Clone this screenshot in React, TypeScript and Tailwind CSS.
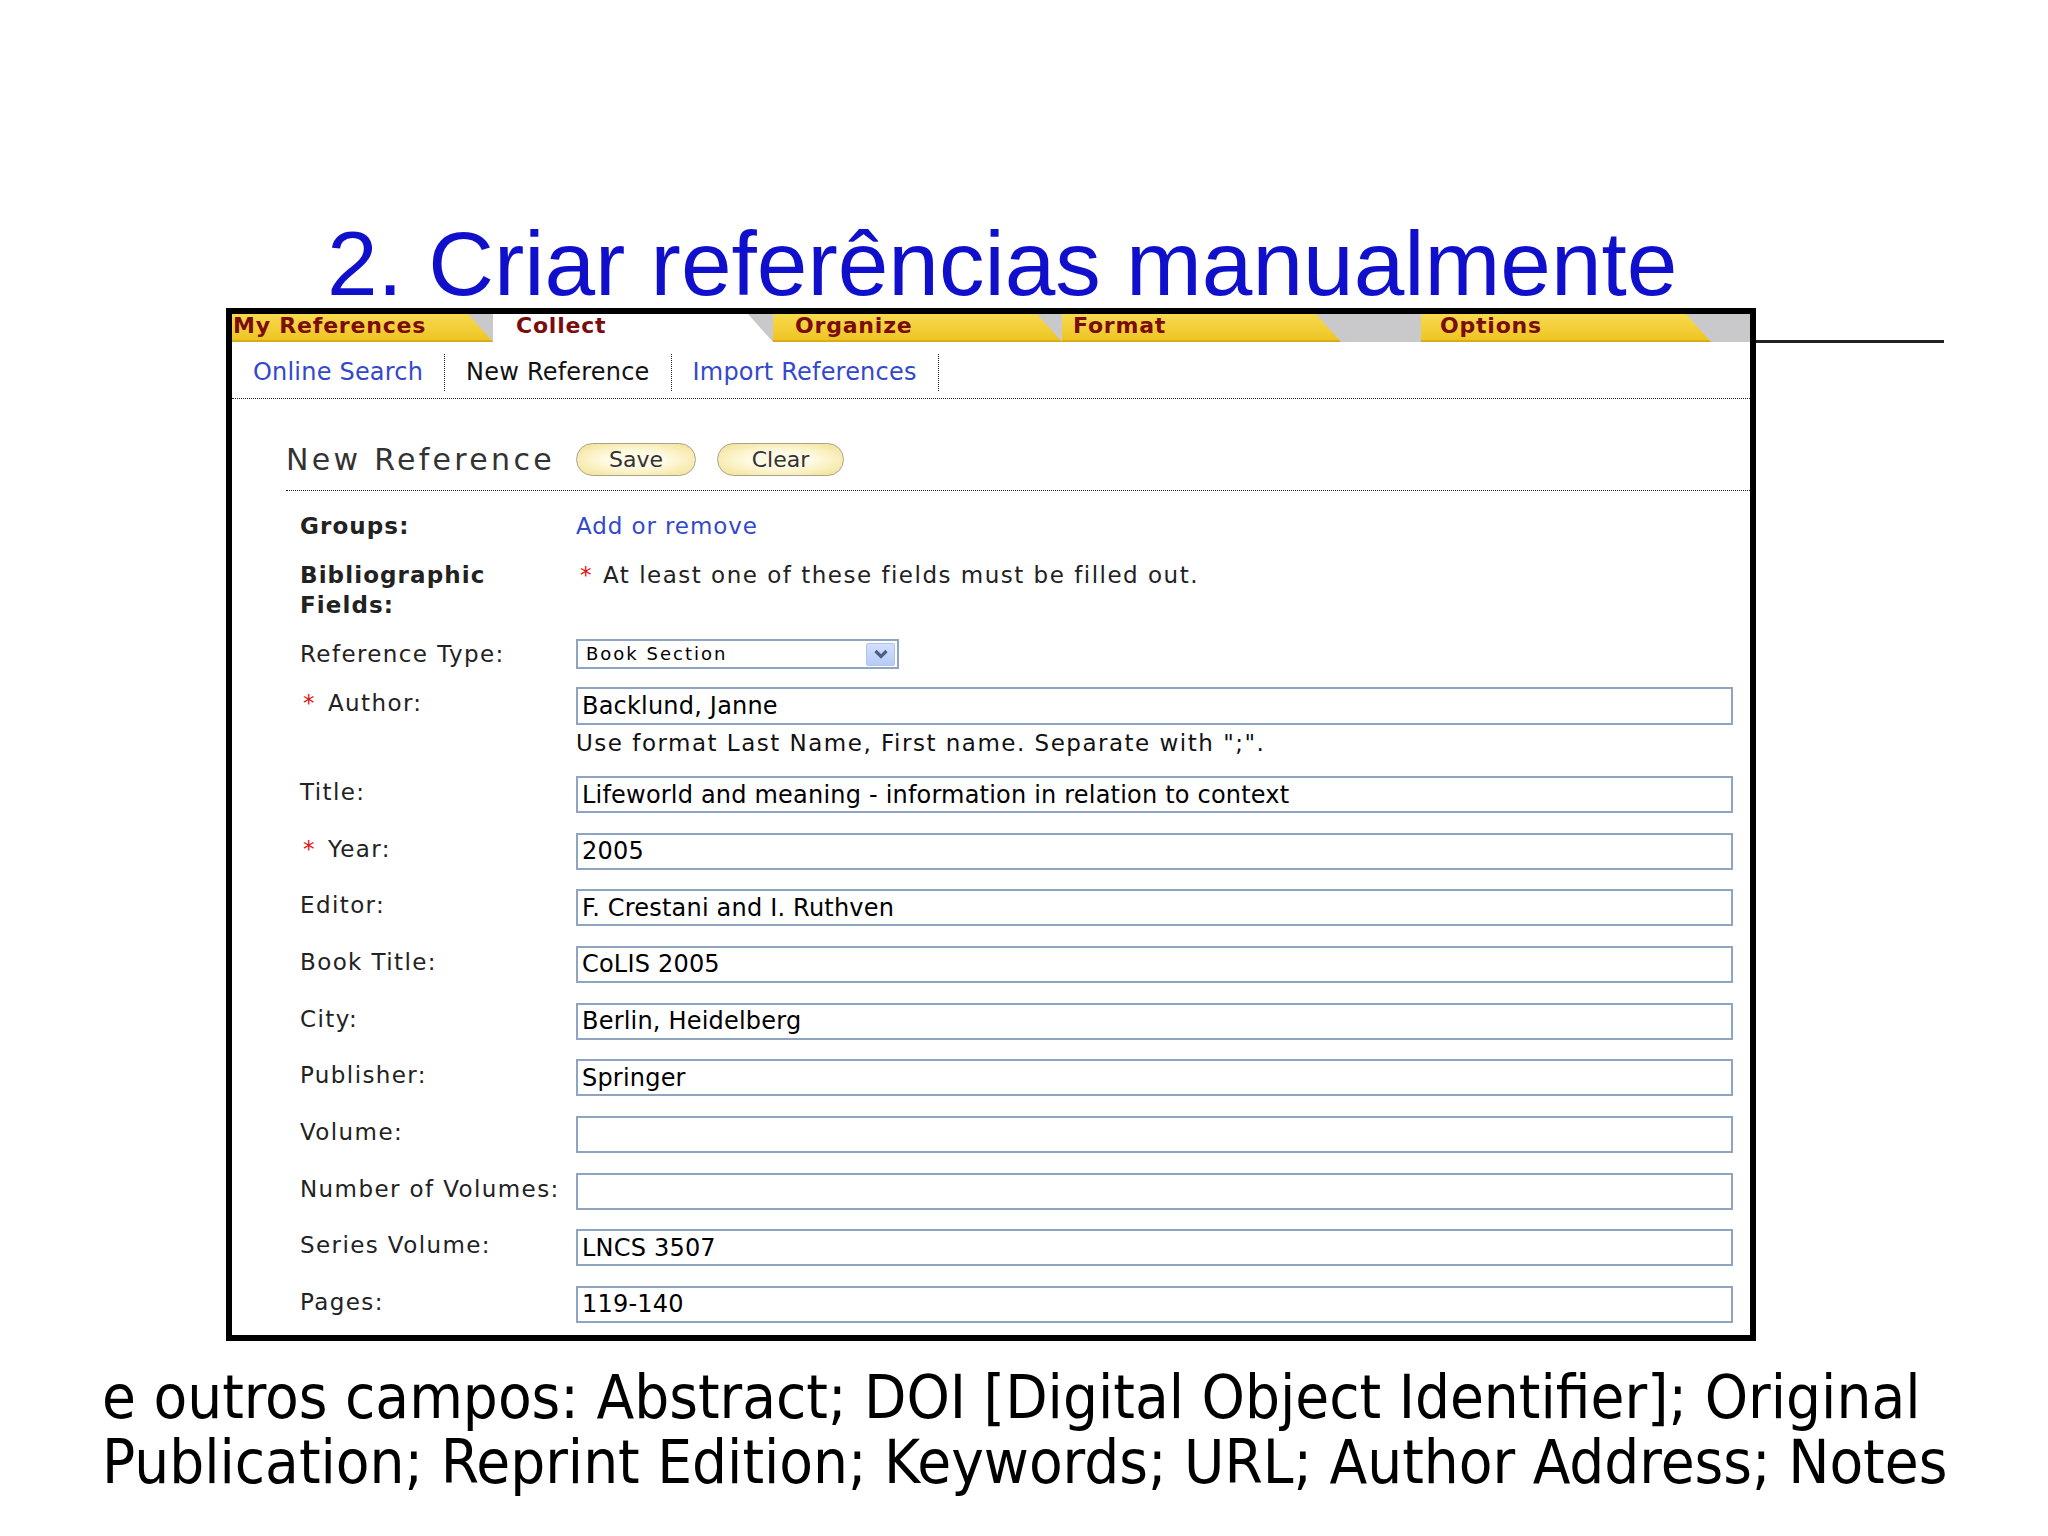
import React from 'react';

// slide: "Criar referências manualmente" with a RefWorks-like form screenshot
const ui = "font-['DejaVu_Sans','Liberation_Sans',sans-serif]";

const tabs = [
  { label: 'My References', w: 'w-[261px]', pl: 'pl-[1px]', active: false },
  { label: 'Collect', w: 'w-[280px]', pl: 'pl-[23px]', active: true },
  { label: 'Organize', w: 'w-[289px]', pl: 'pl-[22px]', active: false },
  { label: 'Format', w: 'w-[279px]', pl: 'pl-[11px]', active: false },
];

const fields = [
  { label: 'Title:', value: 'Lifeworld and meaning - information in relation to context' },
  { label: 'Year:', value: '2005', req: true },
  { label: 'Editor:', value: 'F. Crestani and I. Ruthven' },
  { label: 'Book Title:', value: 'CoLIS 2005' },
  { label: 'City:', value: 'Berlin, Heidelberg' },
  { label: 'Publisher:', value: 'Springer' },
  { label: 'Volume:', value: '' },
  { label: 'Number of Volumes:', value: '' },
  { label: 'Series Volume:', value: 'LNCS 3507' },
  { label: 'Pages:', value: '119-140' },
];

function Tab({ label, w, pl, active }: { label: string; w: string; pl: string; active: boolean }) {
  return (
    <div
      className={`${w} ${pl} h-full shrink-0 [clip-path:polygon(0_0,calc(100%_-_25px)_0,100%_100%,0_100%)] ${
        active ? 'bg-white' : 'bg-gradient-to-b from-[#f7da4c] to-[#eec31c] shadow-[inset_0_-2px_0_#d8ad1c]'
      }`}
    >
      <span className="block text-[22px] leading-[24px] font-bold text-[#7a0c0c] tracking-[0.8px] whitespace-nowrap">
        {label}
      </span>
    </div>
  );
}

function Field({ label, value, req }: { label: string; value: string; req?: boolean }) {
  return (
    <div className="flex items-start">
      <div className="w-[276px] shrink-0 leading-[32px] text-[23px] tracking-[1.4px] text-[#222] whitespace-nowrap">
        {req && <span className="text-[#e31010] ml-[3px] mr-[12px]">*</span>}
        {label}
      </div>
      <div className="flex-1 h-[37px] border-2 border-[#8ea4c0] bg-white flex items-center px-[4px] text-[24px] tracking-[0.2px] text-black whitespace-nowrap overflow-hidden">
        {value}
      </div>
    </div>
  );
}

function PillButton({ children, w }: { children: React.ReactNode; w: string }) {
  return (
    <div
      className={`${w} h-[33px] rounded-full border border-[#a8a38a] bg-[radial-gradient(ellipse_at_center,#fffbe4_35%,#f2df8e_100%)] flex items-center justify-center text-[22px] text-[#333]`}
    >
      {children}
    </div>
  );
}

export default function App() {
  return (
    <div className="w-[2048px] h-[1536px] bg-white overflow-hidden pt-[220px]">
      <h1 className="pl-[327px] h-[88px] leading-[88px] text-[91px] font-['Liberation_Sans',Arial,sans-serif] text-[#1010cc] whitespace-nowrap">
        2. Criar referências manualmente
      </h1>

      <div className="flex items-start ml-[226px]">
        <div className={`w-[1530px] h-[1033px] border-[6px] border-black bg-white flex flex-col ${ui}`}>
          {/* tab strip */}
          <div className="h-[28px] flex bg-[#c9c9cc] shrink-0">
            {tabs.map((t) => (
              <Tab key={t.label} {...t} />
            ))}
            <div className="w-[80px] shrink-0" />
            <Tab label="Options" w="w-[290px]" pl="pl-[19px]" active={false} />
          </div>

          {/* sub navigation */}
          <div className="h-[57px] shrink-0 flex items-center pt-[4px] pl-[21px] border-b border-dotted border-[#222] text-[24px] tracking-[0.2px] whitespace-nowrap">
            <span className="text-[#3448cc]">Online Search</span>
            <div className="mx-[21px] h-[37px] border-l border-dotted border-[#222]" />
            <span className="text-[#111]">New Reference</span>
            <div className="mx-[21px] h-[37px] border-l border-dotted border-[#222]" />
            <span className="text-[#3448cc]">Import References</span>
            <div className="ml-[21px] h-[37px] border-l border-dotted border-[#222]" />
          </div>

          {/* heading */}
          <div className="ml-[54px] pt-[44px] pb-[14px] border-b border-dotted border-[#222] flex items-center gap-[21px] shrink-0">
            <span className="text-[30px] leading-[33px] tracking-[3.3px] text-[#333] whitespace-nowrap">New Reference</span>
            <PillButton w="w-[120px]">Save</PillButton>
            <PillButton w="w-[127px]">Clear</PillButton>
          </div>

          {/* form */}
          <div className="pl-[68px] pr-[17px] flex flex-col text-[23px] leading-[30px] text-[#222]">
            <div className="flex pt-[23px] leading-[24px]">
              <div className="w-[276px] shrink-0 font-bold tracking-[1.1px]">Groups:</div>
              <div className="text-[#3448cc] tracking-[0.9px]">Add or remove</div>
            </div>

            <div className="flex mt-[22px] leading-[30px]">
              <div className="w-[276px] shrink-0 font-bold tracking-[1.1px]">
                Bibliographic
                <br />
                Fields:
              </div>
              <div className="tracking-[1.5px] whitespace-nowrap">
                <span className="text-[#e31010] ml-[4px] mr-[10px]">*</span>
                At least one of these fields must be filled out.
              </div>
            </div>

            <div className="flex items-center h-[30px] mt-[19px]">
              <div className="w-[276px] shrink-0 leading-[30px] tracking-[1.4px] whitespace-nowrap">Reference Type:</div>
              <div className="w-[323px] h-[30px] border-2 border-[#8ea4c0] bg-white flex items-center justify-between pl-[8px] pr-[2px]">
                <span className="text-[18px] leading-[24px] tracking-[2px] text-black whitespace-nowrap">Book Section</span>
                <div className="w-[29px] h-[23px] rounded-[2px] bg-gradient-to-b from-[#d3e0fd] to-[#b7cbf7] border border-[#b0c3ee] flex items-center justify-center">
                  <svg width="16" height="12" viewBox="0 0 16 12">
                    <path d="M2.5 3 L8 8.5 L13.5 3" fill="none" stroke="#4d6185" strokeWidth="3.2" />
                  </svg>
                </div>
              </div>
            </div>

            <div className="flex items-start mt-[18px]">
              <div className="w-[276px] shrink-0 leading-[32px] tracking-[1.4px]">
                <span className="text-[#e31010] ml-[3px] mr-[12px]">*</span>
                Author:
              </div>
              <div className="flex-1 flex flex-col">
                <div className="h-[38px] border-2 border-[#8ea4c0] bg-white flex items-center px-[4px] text-[24px] tracking-[0.2px] text-black">
                  Backlund, Janne
                </div>
                <div className="leading-[36px] tracking-[1.5px] text-[#111] whitespace-nowrap">
                  Use format Last Name, First name. Separate with ";".
                </div>
              </div>
            </div>

            <div className="flex flex-col gap-[19.67px] mt-[15px]">
              {fields.map((f) => (
                <Field key={f.label} {...f} />
              ))}
            </div>
          </div>
        </div>
        <div className="mt-[32px] w-[188px] h-[3px] bg-[#222]" />
      </div>

      <p className="mt-[23px] ml-[102px] text-[61.3px] leading-[65px] text-black font-['DejaVu_Sans_Condensed','DejaVu_Sans',sans-serif] whitespace-nowrap">
        e outros campos: Abstract; DOI [Digital Object Identifier]; Original
        <br />
        Publication; Reprint Edition; Keywords; URL; Author Address; Notes
      </p>
    </div>
  );
}
